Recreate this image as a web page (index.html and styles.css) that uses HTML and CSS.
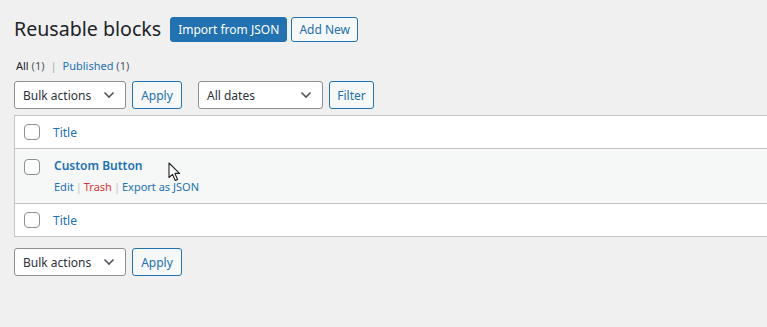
FILE: index.html
```html
<!DOCTYPE html>
<html lang="en">
<head>
    <meta charset="UTF-8">
    <title>Reusable blocks</title>
    <link rel="stylesheet" href="styles.css">
</head>
<body>
<div class="wrap">

    <!-- En-tete -->
    <div class="page-head">
        <h1>Reusable blocks</h1>
        <a class="btn btn-primary">Import from JSON</a>
        <a class="btn btn-outline">Add New</a>
    </div>

    <ul class="subsubsub">
        <li class="current">All <span class="count">(1)</span></li>
        <li class="sep">|</li>
        <li><a>Published <span class="count">(1)</span></a></li>
    </ul>

    <!-- Actions du haut -->
    <div class="tablenav">
        <div class="select sel-bulk">
            <span>Bulk actions</span>
            <svg width="12" height="8" viewBox="0 0 12 8"><path d="M1.5 1.5 L6 6 L10.5 1.5" fill="none" stroke="#50575e" stroke-width="1.6"/></svg>
        </div>
        <a class="btn btn-secondary btn-apply">Apply</a>
        <div class="select sel-dates">
            <span>All dates</span>
            <svg width="12" height="8" viewBox="0 0 12 8"><path d="M1.5 1.5 L6 6 L10.5 1.5" fill="none" stroke="#50575e" stroke-width="1.6"/></svg>
        </div>
        <a class="btn btn-secondary btn-filter">Filter</a>
    </div>

    <!-- Tableau -->
    <div class="list-table">
        <div class="row row-head">
            <span class="check"></span>
            <a class="col-title">Title</a>
        </div>
        <div class="row row-item">
            <span class="check"></span>
            <div class="item-body">
                <a class="item-title">Custom Button</a>
                <div class="row-actions">
                    <a>Edit</a><span class="sep">|</span><a class="trash">Trash</a><span class="sep">|</span><a>Export as JSON</a>
                </div>
            </div>
        </div>
        <div class="row row-head row-foot">
            <span class="check"></span>
            <a class="col-title">Title</a>
        </div>
        <svg class="cursor" width="13" height="20" viewBox="0 0 13 20"><path d="M1 1 L1 15.5 L4.5 12.3 L7.2 18.5 L9.6 17.4 L6.9 11.4 L11.5 11.4 Z" fill="#fff" stroke="#222" stroke-width="1.1" stroke-linejoin="round"/></svg>
    </div>

    <!-- Actions du bas -->
    <div class="tablenav tablenav-bottom">
        <div class="select sel-bulk">
            <span>Bulk actions</span>
            <svg width="12" height="8" viewBox="0 0 12 8"><path d="M1.5 1.5 L6 6 L10.5 1.5" fill="none" stroke="#50575e" stroke-width="1.6"/></svg>
        </div>
        <a class="btn btn-secondary btn-apply">Apply</a>
    </div>

</div>
</body>
</html>
```

FILE: styles.css
```css
body {
    margin: 0;
    background-color: #f0f0f1;
    font-family: "Noto Sans", "Open Sans", sans-serif;
    font-size: 12px;
    color: #1d2327;
    overflow: hidden;
}

a {
    color: #2271b1;
    text-decoration: none;
}

.wrap {
    padding: 14px 0 0 14px;
}

.page-head {
    display: flex;
    align-items: center;
    height: 30px;
}

.page-head h1 {
    margin: 0 9px 0 0;
    font-size: 19.6px;
    font-weight: 400;
    line-height: 30px;
    color: #1d2327;
}

.btn {
    box-sizing: border-box;
    display: inline-flex;
    align-items: center;
    justify-content: center;
    white-space: nowrap;
    border-radius: 3px;
    border: 1px solid #2271b1;
    font-size: 12px;
}

.page-head .btn {
    height: 25px;
    margin-right: 4px;
}

.btn-primary {
    background-color: #2271b1;
    color: white;
    width: 117px;
}

.btn-outline {
    background-color: #f6f7f7;
    color: #2271b1;
    width: 67px;
}

.btn-secondary {
    background-color: #f6f7f7;
    color: #2271b1;
    height: 28px;
}

.btn-apply {
    width: 50px;
}

.btn-filter {
    width: 45px;
}

.subsubsub {
    list-style: none;
    display: flex;
    margin: 14px 0 0 2px;
    padding: 0;
    font-size: 11px;
    line-height: 16px;
    height: 16px;
    color: #646970;
}

.subsubsub li.current {
    color: #1d2327;
}

.subsubsub .count {
    color: #50575e;
}

.subsubsub li.sep {
    margin: 0 6px;
    color: #a7aaad;
}

.tablenav {
    display: flex;
    align-items: center;
    margin-top: 7px;
    height: 28px;
}

.select {
    box-sizing: border-box;
    display: flex;
    align-items: center;
    justify-content: space-between;
    height: 28px;
    padding: 0 10px 0 8px;
    background-color: white;
    border: 1px solid #8c8f94;
    border-radius: 3px;
    color: #2c3338;
    font-size: 12px;
}

.sel-bulk {
    width: 112px;
    margin-right: 6px;
}

.sel-dates {
    width: 125px;
    margin-left: 16px;
    margin-right: 6px;
}

.list-table {
    position: relative;
    margin-top: 6px;
    background-color: white;
    border: 1px solid #c3c4c7;
    border-right: none;
}

.row {
    display: flex;
    align-items: center;
    box-sizing: border-box;
    padding-left: 9px;
}

.row-head {
    height: 33px;
    border-bottom: 1px solid #c3c4c7;
}

.row-foot {
    border-bottom: none;
    border-top: 1px solid #c3c4c7;
    height: 33px;
}

.row-item {
    height: 54px;
    align-items: flex-start;
    background-color: #f6f7f7;
    padding-top: 10px;
}

.check {
    box-sizing: border-box;
    width: 16px;
    height: 16px;
    border: 1px solid #8c8f94;
    border-radius: 4px;
    background-color: white;
}

.col-title {
    margin-left: 13px;
    font-size: 12px;
}

.item-body {
    margin-left: 14px;
    margin-top: -2px;
}

.item-title {
    display: block;
    font-weight: 600;
    font-size: 12px;
    line-height: 18px;
}

.row-actions {
    margin-top: 4px;
    font-size: 11px;
    line-height: 16px;
    color: #c3c4c7;
}

.row-actions .sep {
    margin: 0 2px;
}

.row-actions .trash {
    color: #d63638;
}

.cursor {
    position: absolute;
    left: 153px;
    top: 46px;
}

.tablenav-bottom {
    margin-top: 11px;
}
```
